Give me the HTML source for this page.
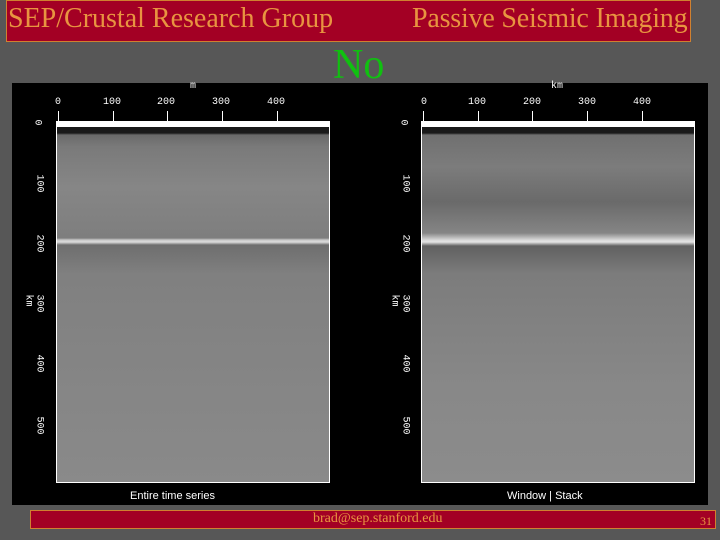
<!DOCTYPE html>
<html><head><style>
body{margin:0;width:720px;height:540px;background:#575757;position:relative;overflow:hidden;font-family:"Liberation Serif",serif}
.hdr{position:absolute;left:6px;top:0;width:683px;height:40px;background:#a30024;border:1px solid #d08030}
.hdr span{position:absolute;top:1px;color:#e89440;font-size:28px;line-height:34px;white-space:nowrap}
.no{position:absolute;left:333px;top:42px;color:#10c010;font-size:42px;line-height:46px}
.panel{position:absolute;left:12px;top:83px;width:696px;height:422px;background:#000}
.img{position:absolute;top:38px;width:274px;height:362px;border:1px solid #fff;border-top:6px solid #fff;box-sizing:border-box;
background:linear-gradient(#1a1a1a 0,#1a1a1a 6px,#6a6a6a 8px,#7a7a7a 20px,#868686 60px,#7e7e7e 111px,#c8c8c8 113px,#dcdcdc 115px,#6e6e6e 118px,#808080 147px,#858585 250px,#8a8a8a 362px)}
.r{background:linear-gradient(#1a1a1a 0,#1a1a1a 6px,#707070 8px,#7c7c7c 40px,#6a6a6a 75px,#858585 106px,#d8d8d8 113px,#e4e4e4 115px,#606060 119px,#7c7c7c 147px,#888888 260px,#8c8c8c 362px)}
.t{position:absolute;color:#fff;font-family:"Liberation Mono",monospace;font-size:10px;white-space:nowrap}
.tk{position:absolute;background:#fff;top:28px;width:1px;height:10px}
.ftr{position:absolute;left:30px;top:510px;width:684px;height:17px;background:#a30024;border:1px solid #d08030}
.ftr span{position:absolute;color:#e89440;font-size:14px;top:0;white-space:nowrap}
</style></head><body>
<div class="hdr"><span style="left:1px">SEP/Crustal Research Group</span><span style="left:405px;letter-spacing:-0.2px">Passive Seismic Imaging</span></div>
<div class="no">No</div>
<div class="panel">
 <div class="img" style="left:44px"></div>
 <div class="img r" style="left:409px"></div>
 <div class="t" style="left:178px;top:-2px">m</div>
 <div class="t" style="left:539px;top:-2px">km</div>
 <div class="t" style="left:43px;top:14px">0</div>
 <div class="t" style="left:91px;top:14px">100</div>
 <div class="t" style="left:145px;top:14px">200</div>
 <div class="t" style="left:200px;top:14px">300</div>
 <div class="t" style="left:255px;top:14px">400</div>
 <div class="t" style="left:409px;top:14px">0</div>
 <div class="t" style="left:456px;top:14px">100</div>
 <div class="t" style="left:511px;top:14px">200</div>
 <div class="t" style="left:566px;top:14px">300</div>
 <div class="t" style="left:621px;top:14px">400</div>
 <div class="tk" style="left:46px"></div>
 <div class="tk" style="left:101px"></div>
 <div class="tk" style="left:155px"></div>
 <div class="tk" style="left:210px"></div>
 <div class="tk" style="left:265px"></div>
 <div class="tk" style="left:411px"></div>
 <div class="tk" style="left:466px"></div>
 <div class="tk" style="left:520px"></div>
 <div class="tk" style="left:575px"></div>
 <div class="tk" style="left:630px"></div>
 <div class="t" style="left:22px;top:34px;transform:rotate(90deg)">0</div>
 <div class="t" style="left:18px;top:95px;transform:rotate(90deg)">100</div>
 <div class="t" style="left:18px;top:155px;transform:rotate(90deg)">200</div>
 <div class="t" style="left:18px;top:215px;transform:rotate(90deg)">300</div>
 <div class="t" style="left:18px;top:275px;transform:rotate(90deg)">400</div>
 <div class="t" style="left:18px;top:337px;transform:rotate(90deg)">500</div>
 <div class="t" style="left:10px;top:212px;transform:rotate(90deg)">km</div>
 <div class="t" style="left:388px;top:34px;transform:rotate(90deg)">0</div>
 <div class="t" style="left:384px;top:95px;transform:rotate(90deg)">100</div>
 <div class="t" style="left:384px;top:155px;transform:rotate(90deg)">200</div>
 <div class="t" style="left:384px;top:215px;transform:rotate(90deg)">300</div>
 <div class="t" style="left:384px;top:275px;transform:rotate(90deg)">400</div>
 <div class="t" style="left:384px;top:337px;transform:rotate(90deg)">500</div>
 <div class="t" style="left:376px;top:212px;transform:rotate(90deg)">km</div>
 <div class="t" style="left:118px;top:407px;font-family:'Liberation Sans',sans-serif;font-size:11px">Entire time series</div>
 <div class="t" style="left:495px;top:407px;font-family:'Liberation Sans',sans-serif;font-size:11px">Window | Stack</div>
</div>
<div class="ftr"><span style="left:282px">brad@sep.stanford.edu</span><span style="left:669px;top:3px;font-size:12px">31</span></div>
</body></html>
